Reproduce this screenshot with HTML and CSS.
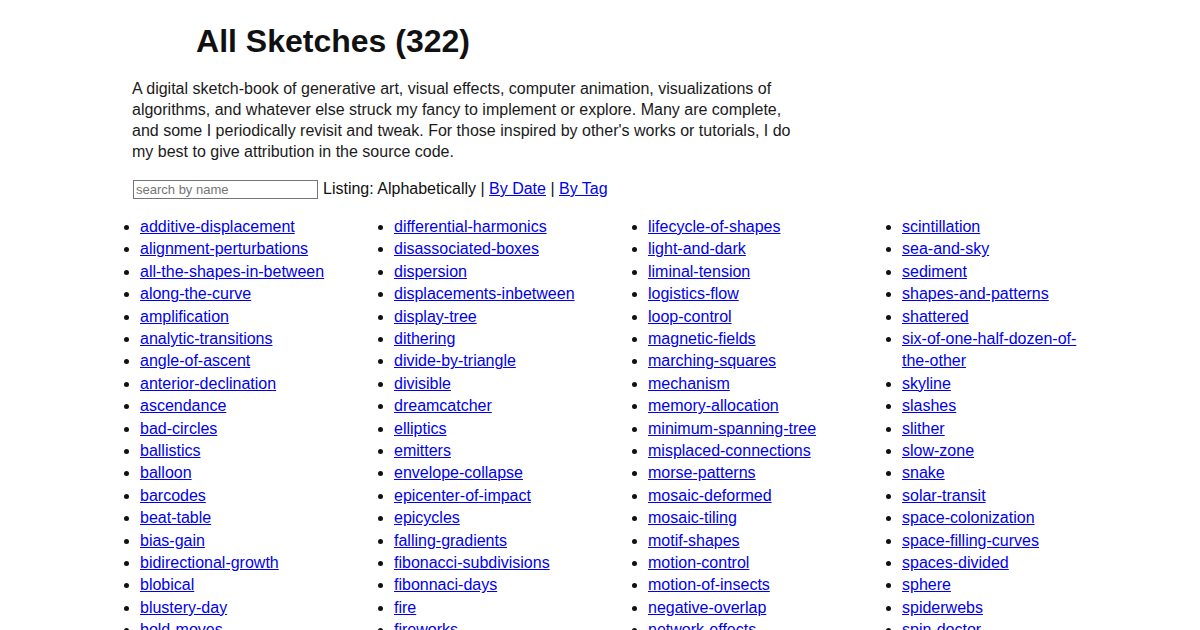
FILE: index.html
```html
<!DOCTYPE html>
<html>
<head>
<meta charset="utf-8">
<link rel="stylesheet" href="styles.css">
</head>
<body>
<div class="page">
  <h1 class="title">All Sketches (322)</h1>
  <p class="intro">A digital sketch-book of generative art, visual effects, computer animation, visualizations of algorithms, and whatever else struck my fancy to implement or explore. Many are complete, and some I periodically revisit and tweak. For those inspired by other's works or tutorials, I do my best to give attribution in the source code.</p>
  <div class="controls">
    <input class="search" type="text" placeholder="search by name">
    <span>Listing: Alphabetically | <a href="#">By Date</a> | <a href="#">By Tag</a></span>
  </div>
</div>
<div class="cols">
  <ul>
    <li><a href="#">additive-displacement</a></li>
    <li><a href="#">alignment-perturbations</a></li>
    <li><a href="#">all-the-shapes-in-between</a></li>
    <li><a href="#">along-the-curve</a></li>
    <li><a href="#">amplification</a></li>
    <li><a href="#">analytic-transitions</a></li>
    <li><a href="#">angle-of-ascent</a></li>
    <li><a href="#">anterior-declination</a></li>
    <li><a href="#">ascendance</a></li>
    <li><a href="#">bad-circles</a></li>
    <li><a href="#">ballistics</a></li>
    <li><a href="#">balloon</a></li>
    <li><a href="#">barcodes</a></li>
    <li><a href="#">beat-table</a></li>
    <li><a href="#">bias-gain</a></li>
    <li><a href="#">bidirectional-growth</a></li>
    <li><a href="#">blobical</a></li>
    <li><a href="#">blustery-day</a></li>
    <li><a href="#">bold-moves</a></li>
    <li><a href="#">bouncing-balls</a></li>
  </ul>
  <ul>
    <li><a href="#">differential-harmonics</a></li>
    <li><a href="#">disassociated-boxes</a></li>
    <li><a href="#">dispersion</a></li>
    <li><a href="#">displacements-inbetween</a></li>
    <li><a href="#">display-tree</a></li>
    <li><a href="#">dithering</a></li>
    <li><a href="#">divide-by-triangle</a></li>
    <li><a href="#">divisible</a></li>
    <li><a href="#">dreamcatcher</a></li>
    <li><a href="#">elliptics</a></li>
    <li><a href="#">emitters</a></li>
    <li><a href="#">envelope-collapse</a></li>
    <li><a href="#">epicenter-of-impact</a></li>
    <li><a href="#">epicycles</a></li>
    <li><a href="#">falling-gradients</a></li>
    <li><a href="#">fibonacci-subdivisions</a></li>
    <li><a href="#">fibonnaci-days</a></li>
    <li><a href="#">fire</a></li>
    <li><a href="#">fireworks</a></li>
    <li><a href="#">flocking</a></li>
  </ul>
  <ul>
    <li><a href="#">lifecycle-of-shapes</a></li>
    <li><a href="#">light-and-dark</a></li>
    <li><a href="#">liminal-tension</a></li>
    <li><a href="#">logistics-flow</a></li>
    <li><a href="#">loop-control</a></li>
    <li><a href="#">magnetic-fields</a></li>
    <li><a href="#">marching-squares</a></li>
    <li><a href="#">mechanism</a></li>
    <li><a href="#">memory-allocation</a></li>
    <li><a href="#">minimum-spanning-tree</a></li>
    <li><a href="#">misplaced-connections</a></li>
    <li><a href="#">morse-patterns</a></li>
    <li><a href="#">mosaic-deformed</a></li>
    <li><a href="#">mosaic-tiling</a></li>
    <li><a href="#">motif-shapes</a></li>
    <li><a href="#">motion-control</a></li>
    <li><a href="#">motion-of-insects</a></li>
    <li><a href="#">negative-overlap</a></li>
    <li><a href="#">network-effects</a></li>
    <li><a href="#">noise-fields</a></li>
  </ul>
  <ul>
    <li><a href="#">scintillation</a></li>
    <li><a href="#">sea-and-sky</a></li>
    <li><a href="#">sediment</a></li>
    <li><a href="#">shapes-and-patterns</a></li>
    <li><a href="#">shattered</a></li>
    <li><a href="#">six-of-one-half-dozen-of-the-other</a></li>
    <li><a href="#">skyline</a></li>
    <li><a href="#">slashes</a></li>
    <li><a href="#">slither</a></li>
    <li><a href="#">slow-zone</a></li>
    <li><a href="#">snake</a></li>
    <li><a href="#">solar-transit</a></li>
    <li><a href="#">space-colonization</a></li>
    <li><a href="#">space-filling-curves</a></li>
    <li><a href="#">spaces-divided</a></li>
    <li><a href="#">sphere</a></li>
    <li><a href="#">spiderwebs</a></li>
    <li><a href="#">spin-doctor</a></li>
    <li><a href="#">spirals</a></li>
  </ul>
</div>
</body>
</html>
```
FILE: styles.css
```css
html, body {
  margin: 0;
  padding: 0;
  background: #fff;
}
body {
  font-family: "Liberation Sans", Arial, sans-serif;
  color: #111;
  line-height: 1.4;
}
.page {
  padding-left: 132px;
}
.title {
  width: 402px;
  margin: 23px 0 0 0;
  text-align: center;
  font-size: 32px;
  font-weight: bold;
  line-height: 37px;
}
.intro {
  width: 672px;
  margin: 18px 0 0 0;
  font-size: 16px;
  line-height: 21px;
  color: #1a1a1a;
}
.controls {
  margin-top: 16px;
  font-size: 16px;
  display: flex;
  align-items: center;
  gap: 5px;
}
.search {
  box-sizing: border-box;
  width: 185px;
  height: 19px;
  margin: 0 0 0 1px;
  padding: 1px 2px;
  border: 1px solid #767676;
  font-family: "Liberation Sans", Arial, sans-serif;
  font-size: 13px;
}
.search::placeholder {
  color: #757575;
}
a {
  color: #0000ee;
}
.cols {
  display: grid;
  grid-template-columns: repeat(4, 254px);
  padding-left: 100px;
  margin-top: 15.6px;
}
.cols ul {
  margin: 0;
  width: 192px;
  padding-left: 40px;
  font-size: 16px;
  line-height: 22.4px;
}
```
